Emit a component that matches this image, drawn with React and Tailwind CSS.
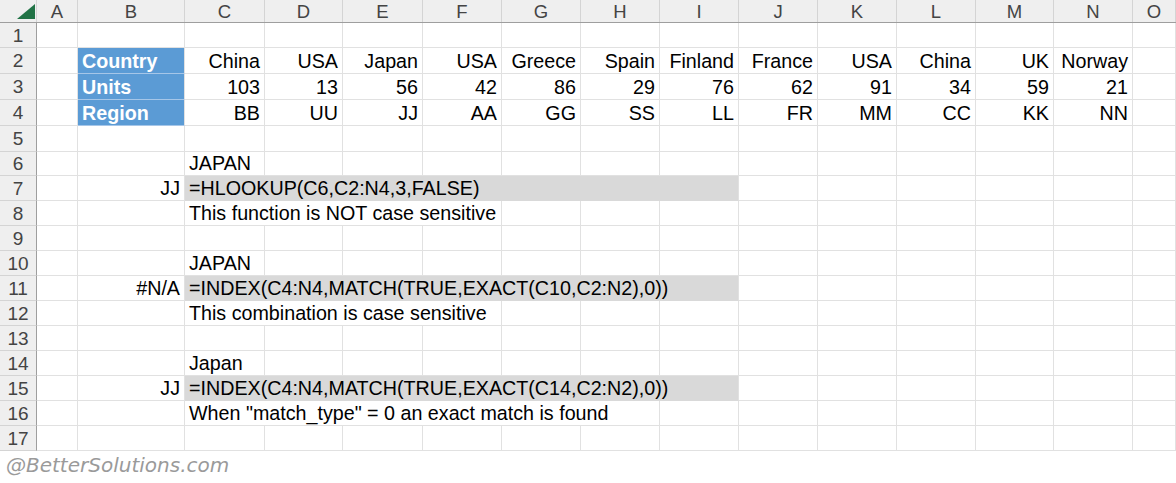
import React from "react";

const letters = ["A", "B", "C", "D", "E", "F", "G", "H", "I", "J", "K", "L", "M", "N", "O"];

const countries = ["China", "USA", "Japan", "USA", "Greece", "Spain", "Finland", "France", "USA", "China", "UK", "Norway"];
const units = ["103", "13", "56", "42", "86", "29", "76", "62", "91", "34", "59", "21"];
const regions = ["BB", "UU", "JJ", "AA", "GG", "SS", "LL", "FR", "MM", "CC", "KK", "NN"];

const gridCols =
  "grid grid-cols-[37px_41px_107px_80px_78px_80px_79px_79px_79px_79px_79px_79px_79px_78px_79px_1fr]";

const blank = (n) => Array.from({ length: n }, () => ({}));

const tableRow = (label, values) => [
  {},
  { text: label, kind: "blue" },
  ...values.map((v) => ({ text: v, align: "right" })),
  {},
];

const noteRow = (result, formula) => [
  {},
  { text: result, align: "right" },
  { text: formula, span: "col-span-7", kind: "gray" },
  ...blank(6),
];

const rows = [
  { h: "h-[25px]", cells: blank(15) },
  { h: "h-[26px]", cells: tableRow("Country", countries) },
  { h: "h-[26px]", cells: tableRow("Units", units) },
  { h: "h-[26px]", cells: tableRow("Region", regions) },
  { h: "h-[26px]", cells: blank(15) },
  { h: "h-[24px]", cells: [...blank(2), { text: "JAPAN" }, ...blank(12)] },
  { h: "h-[25px]", cells: noteRow("JJ", "=HLOOKUP(C6,C2:N4,3,FALSE)") },
  { h: "h-[25px]", cells: [...blank(2), { text: "This function is NOT case sensitive", span: "col-span-4" }, ...blank(9)] },
  { h: "h-[25px]", cells: blank(15) },
  { h: "h-[25px]", cells: [...blank(2), { text: "JAPAN" }, ...blank(12)] },
  { h: "h-[25px]", cells: noteRow("#N/A", "=INDEX(C4:N4,MATCH(TRUE,EXACT(C10,C2:N2),0))") },
  { h: "h-[25px]", cells: [...blank(2), { text: "This combination is case sensitive", span: "col-span-4" }, ...blank(9)] },
  { h: "h-[25px]", cells: blank(15) },
  { h: "h-[25px]", cells: [...blank(2), { text: "Japan" }, ...blank(12)] },
  { h: "h-[25px]", cells: noteRow("JJ", "=INDEX(C4:N4,MATCH(TRUE,EXACT(C14,C2:N2),0))") },
  { h: "h-[25px]", cells: [...blank(2), { text: 'When "match_type" = 0 an exact match is found', span: "col-span-6" }, ...blank(7)] },
  { h: "h-[25px]", cells: blank(15) },
];

const Cell = ({ cell }) => {
  let cls = "flex items-end pb-[1px] px-[4px] whitespace-nowrap overflow-visible border-r border-b border-[#e1e1e1]";
  if (cell.kind === "blue") cls += " bg-[#5b9bd5] text-white font-bold border-b-[#a6c6e8] border-r-[#e1e1e1]";
  if (cell.kind === "gray") cls += " bg-[#d9d9d9] border-b-[#d9d9d9]";
  if (cell.align === "right") cls += " justify-end";
  if (cell.span) cls += " " + cell.span;
  return <div className={cls}>{cell.text}</div>;
};

export default function App() {
  return (
    <div className="w-[1176px] h-[483px] bg-white overflow-hidden font-['Liberation_Sans',Arial,sans-serif] text-[19.7px] leading-[21px] text-black">
      <div className={`${gridCols} h-[23px] bg-[#efefef] border-b border-[#9e9e9e] text-[#444] text-[18.5px]`}>
        <div className="relative border-r border-[#d4d4d4]">
          <svg className="absolute left-[17px] top-[4px]" width="18" height="15" viewBox="0 0 18 15">
            <polygon points="18,0 18,15 0,15" fill="#217346" />
          </svg>
        </div>
        {letters.map((l) => (
          <div key={l} className="flex items-center justify-center border-r border-[#d4d4d4]">
            {l}
          </div>
        ))}
      </div>
      {rows.map((r, i) => (
        <div key={i} className={`${gridCols} ${r.h}`}>
          <div className="flex items-center justify-center bg-[#efefef] border-r border-r-[#9e9e9e] border-b border-b-[#d4d4d4] text-[#444] text-[19px]">
            {i + 1}
          </div>
          {r.cells.map((c, j) => (
            <Cell key={j} cell={c} />
          ))}
        </div>
      ))}
      <div className="pl-[6px] pt-[4px] text-[20px] italic text-[#9a9a9a] font-['DejaVu_Sans',cursive]">
        @BetterSolutions.com
      </div>
    </div>
  );
}
